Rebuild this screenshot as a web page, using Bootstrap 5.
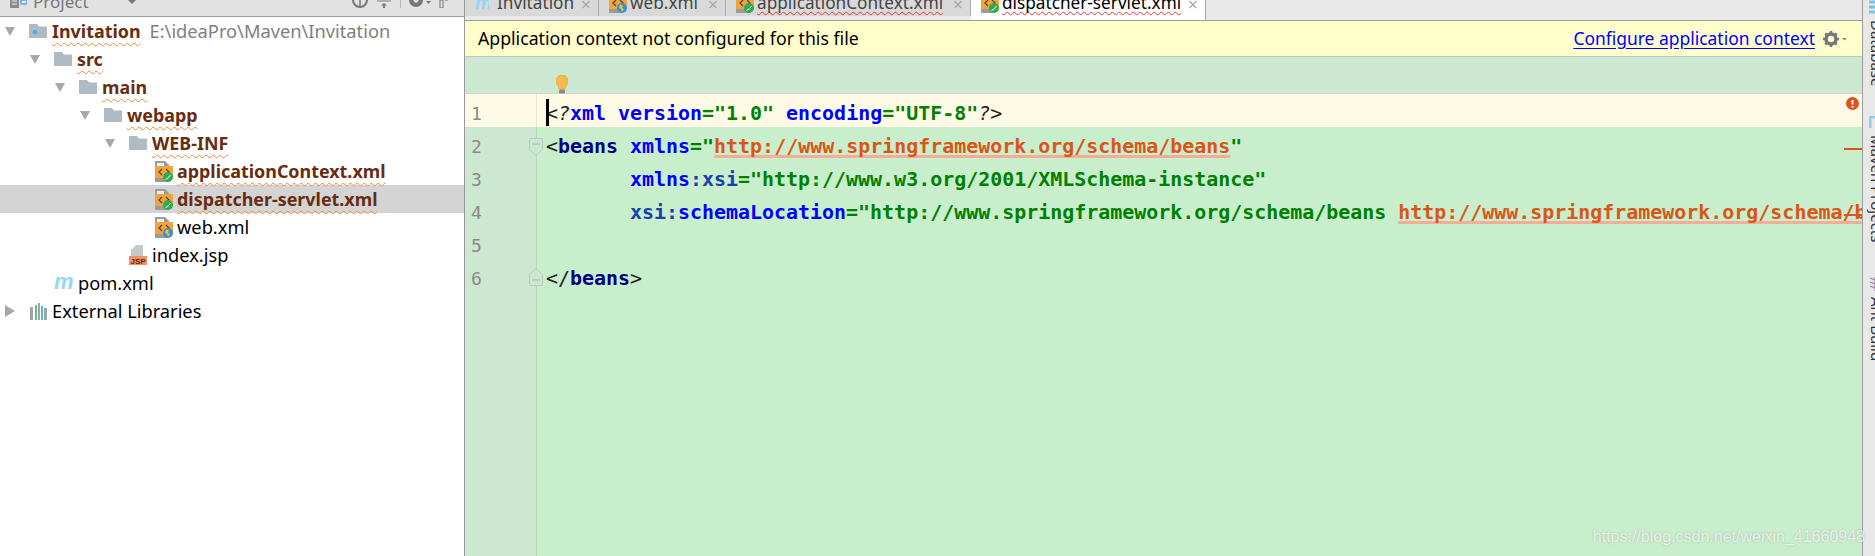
<!DOCTYPE html>
<html><head><meta charset="utf-8"><title>IDE</title>
<link rel="stylesheet" href="https://cdn.jsdelivr.net/npm/bootstrap@5.3.0/dist/css/bootstrap.min.css">
<style>
html,body{height:556px;overflow:hidden;margin:0}
body{font-family:"Noto Sans","Open Sans",sans-serif;font-size:18.25px;color:#000;background:#fff}
.ide-root{height:556px;width:1875px;position:relative}
.side-pane{width:465px;flex:none;border-right:1px solid #999}
.pane-head{height:17px;background:#e2e2e2;border-bottom:1px solid #9c9c9c;overflow:hidden;padding-left:10px;color:#777}
.pane-head svg{flex:none}
.pane-title{margin-left:6px;width:95px;line-height:26px;height:26px;margin-top:-11px;font-size:17px;flex:none}
.tree-row{height:28px;white-space:nowrap;line-height:28px}
.tree-row svg{flex:none}
.lv0{padding-left:5px}.lv1{padding-left:30px}.lv2{padding-left:55px}.lv3{padding-left:80px}.lv4{padding-left:105px}.lv5{padding-left:155px}
.lv-i{padding-left:129px}.lv-p{padding-left:54px}
.tri{width:10px;margin-right:14px}
.ico{margin-right:5px}
.tree-row.is-sel{background:#d4d4d4}
.bad{font-size:17.9px;font-weight:700;color:#682c10;text-decoration:underline wavy #f08a3c 1px;text-underline-offset:4px;text-decoration-skip-ink:none}
.dim{color:#808080;margin-left:9px}
.main-pane{min-width:0}
.tab-strip{height:21px;background:#e9e9e9;border-bottom:1px solid #9c9c9c;flex:none;overflow:hidden}
.ed-tab{height:16px;background:#d9d9d9;border-right:1px solid #aaa;overflow:hidden;padding-left:10px;font-size:17.2px}
.ed-tab.is-on{background:#fff;height:20px}
.tab-ico{flex:none}
.tab-lbl{line-height:26px;height:26px;margin-top:-10px;margin-left:3px;color:#444;white-space:nowrap}
.is-on .tab-lbl{color:#000}
.tab-x{color:#aaa;font-size:18px;line-height:14px;margin-top:-3px;margin-right:7px;margin-left:auto}
.red-sq{text-decoration:underline wavy #e33 1px;text-underline-offset:2px;text-decoration-skip-ink:none}
.note-bar{height:36px;background:#ffffcc;border-bottom:1px solid #c4c4c4;flex:none;padding:0 15px 0 13px;font-size:17.7px;line-height:35px}
.note-link{color:#0000ff;text-decoration:underline;text-underline-offset:3px;font-size:17.45px}
.code-area{position:relative;background:#c8eecb;min-height:0;overflow:hidden}
.top-space{height:37px;background:#cde8d1;flex:none;border-bottom:1px solid #d8d8c8}
.code-line{height:33px;flex:none}
.gut{width:72px;flex:none;background:#cce8d0;border-right:1px solid #b8d8bd;position:relative;color:#8a8a8a;font-family:"DejaVu Sans Mono",monospace;font-size:18px;line-height:39px;padding-left:6px}
.cur .gut,.cur{background:#fffae6}
.cur .gut{border-right-color:#ebe6d4}
.src{font-family:"DejaVu Sans Mono",monospace;font-size:19.94px;line-height:39px;white-space:pre;padding-left:9px;overflow:hidden;flex:1 1 0;color:#222}
.k{color:#000080;font-weight:700}.a{color:#0000ff;font-weight:700}.n{color:#1a3fb0;font-weight:700}.v{color:#008000;font-weight:700}
.e{color:#dc5518;font-weight:700;text-decoration:underline 3px #f7ac98;text-underline-offset:2px;text-decoration-skip-ink:none}
.q{font-style:italic}
.filler{background:#c8eecb;min-height:0}
.caret-bar{position:absolute;left:81px;top:42px;width:3px;height:27px;background:#000}
.bulb{position:absolute;left:91px;top:18px}
.fold{position:absolute;right:-7px}
.fold-a{top:11px}.fold-b{top:9px}
.err-dot{position:absolute;right:3px;top:40px}
.err-tick{position:absolute;right:0;width:18px;height:2px;background:#d9541e}
.tick-a{top:91px}.tick-b{top:157px}
.tool-rail{width:13px;flex:none;background:#e8e8e8;border-left:1px solid #9c9c9c;overflow:hidden;padding-left:6px}
.rail-lbl{writing-mode:vertical-rl;font-size:15px;line-height:15px;white-space:nowrap;color:#333;flex:none}
.rail-ico{flex:none}
.ic-a{margin-top:0}.ic-b{margin-top:30px}.ic-c{margin-top:32px}
.r1{margin-top:5px;height:66px}.r2{margin-top:7px;height:110px}.r3{margin-top:6px}
.mark-wm{position:absolute;right:10px;bottom:9px;font-family:"Liberation Sans",sans-serif;font-size:16px;line-height:20px;color:rgba(255,255,255,.72);text-shadow:0 0 2px rgba(120,120,120,.45);white-space:nowrap}
</style></head>
<body>
<svg width="0" height="0" class="position-absolute">
<defs>
<symbol id="fld" viewBox="0 0 18 14"><path d="M0 0h8l2 2.500h8V14H0z" fill="#afbac3"/></symbol>
<symbol id="xmlbase" viewBox="0 0 18 21"><path d="M0 0h10l4 4v17H0z" fill="#9b9b9b"/><path d="M2 2h7v4h3v2H2z" fill="#f2f2f2"/><rect y="5" width="18" height="12" fill="#f0a43e"/><path d="M7 8l-3 3 3 3M11 8l3 3-3 3" fill="none" stroke="#5a4020" stroke-width="1.200"/></symbol>
<symbol id="leaf" viewBox="0 0 10 10"><circle cx="5" cy="5" r="5" fill="#2eaa50"/><path d="M2.500 7.500Q5 7 7.500 3" fill="none" stroke="#fff" stroke-width="1"/></symbol>
<symbol id="globe" viewBox="0 0 10 10"><circle cx="5" cy="5" r="5" fill="#3a8fd6"/><path d="M3 1.500l3 1-1 2.500 2 1-2 3-1-3-2-1z" fill="#f2c230"/></symbol>
<symbol id="tri-d" viewBox="0 0 10 9"><path d="M0 0h10L5 9z" fill="#a8a8a8"/></symbol>
</defs>
</svg>
<div class="ide-root d-flex">
  <aside class="side-pane d-flex flex-column">
    <div class="pane-head d-flex">
      <svg width="17" height="8" viewBox="0 0 17 8"><path d="M0 0h9v8H0z" fill="#8a8a8a"/><path d="M2 1h5M2 4h5" stroke="#eee"/><path d="M11 0h6v4h-6z" fill="none" stroke="#5aa9d6" stroke-width="1.500"/></svg>
      <span class="pane-title">Project</span>
      <svg width="8" height="4" viewBox="0 0 8 4"><path d="M0 0h8L4 4z" fill="#777"/></svg>
      <span class="flex-grow-1"></span>
      <svg width="16" height="8" viewBox="0 0 16 8"><path d="M1 0a7 7 0 0 0 14 0" fill="none" stroke="#777" stroke-width="2"/><path d="M8 0v8" stroke="#777" stroke-width="1.500"/></svg>
      <svg class="ms-2" width="16" height="8" viewBox="0 0 16 8"><path d="M1 1h14" stroke="#777"/><path d="M8 3l-3 2.500h2V8h2V5.500h2z" fill="#777"/></svg>
      <svg class="ms-2" width="1" height="8"><rect width="1" height="8" fill="#bbb"/></svg>
      <svg class="ms-2" width="22" height="9" viewBox="0 0 22 9"><circle cx="7" cy="0" r="7" fill="#777"/><circle cx="7" cy="0" r="2.500" fill="#e2e2e2"/><path d="M17 1h5l-2.500 3z" fill="#777"/></svg>
      <svg class="ms-2 me-3" width="9" height="8" viewBox="0 0 9 8"><path d="M1 0h3v8H1z" fill="none" stroke="#777"/><path d="M6 0h3" stroke="#777"/></svg>
    </div>
    <ul class="list-unstyled m-0">
      <li class="tree-row lv0 d-flex align-items-center"><svg class="tri" width="10" height="9"><use href="#tri-d"/></svg><svg class="ico" width="18" height="14" viewBox="0 0 18 14"><use href="#fld" width="18" height="14"/><circle cx="6" cy="8" r="2.300" fill="#3fb2e8"/></svg><span class="bad">Invitation</span><span class="dim">E:\ideaPro\Maven\Invitation</span></li>
      <li class="tree-row lv1 d-flex align-items-center"><svg class="tri" width="10" height="9"><use href="#tri-d"/></svg><svg class="ico" width="18" height="14"><use href="#fld"/></svg><span class="bad">src</span></li>
      <li class="tree-row lv2 d-flex align-items-center"><svg class="tri" width="10" height="9"><use href="#tri-d"/></svg><svg class="ico" width="18" height="14"><use href="#fld"/></svg><span class="bad">main</span></li>
      <li class="tree-row lv3 d-flex align-items-center"><svg class="tri" width="10" height="9"><use href="#tri-d"/></svg><svg class="ico" width="18" height="14"><use href="#fld"/></svg><span class="bad">webapp</span></li>
      <li class="tree-row lv4 d-flex align-items-center"><svg class="tri" width="10" height="9"><use href="#tri-d"/></svg><svg class="ico" width="18" height="14"><use href="#fld"/></svg><span class="bad">WEB-INF</span></li>
      <li class="tree-row lv5 d-flex align-items-center"><svg class="me-1" width="18" height="21" viewBox="0 0 18 21"><use href="#xmlbase" width="18" height="21"/><use href="#leaf" x="8" y="11" width="10" height="10"/></svg><span class="bad">applicationContext.xml</span></li>
      <li class="tree-row is-sel lv5 d-flex align-items-center"><svg class="me-1" width="18" height="21" viewBox="0 0 18 21"><use href="#xmlbase" width="18" height="21"/><use href="#leaf" x="8" y="11" width="10" height="10"/></svg><span class="bad">dispatcher-servlet.xml</span></li>
      <li class="tree-row lv5 d-flex align-items-center"><svg class="me-1" width="18" height="21" viewBox="0 0 18 21"><use href="#xmlbase" width="18" height="21"/><use href="#globe" x="8" y="11" width="10" height="10"/></svg><span>web.xml</span></li>
      <li class="tree-row lv-i d-flex align-items-center"><svg class="ico" width="18" height="20" viewBox="0 0 18 20"><path d="M2 5l5-5h7v11H2z" fill="#c4c9cc"/><rect y="11" width="18" height="9" fill="#f2906a"/><text x="9" y="18.500" font-family="Liberation Sans,sans-serif" font-size="8" font-weight="700" text-anchor="middle" fill="#5a2a14">JSP</text></svg><span>index.jsp</span></li>
      <li class="tree-row lv-p d-flex align-items-center"><svg class="me-1" width="20" height="16" viewBox="0 0 20 16"><text x="0" y="14" font-family="Liberation Sans,sans-serif" font-style="italic" font-weight="700" font-size="22" fill="#93d7f4">m</text></svg><span>pom.xml</span></li>
      <li class="tree-row lv0 d-flex align-items-center"><svg class="tri" width="10" height="12" viewBox="0 0 10 12"><path d="M0 0l10 6-10 6z" fill="#a8a8a8"/></svg><svg class="ico" width="18" height="17" viewBox="0 0 18 17"><path d="M1 4h3v13H1z" fill="#9aa5ac"/><path d="M6 2h2v15H6z" fill="#6cbf6c"/><path d="M9 0h2v17H9z" fill="#9aa5ac"/><path d="M12 3h2v14h-2z" fill="#55b5e6"/><path d="M15 5h3v12h-3z" fill="#9aa5ac"/></svg><span>External Libraries</span></li>
    </ul>
  </aside>
  <main class="main-pane flex-grow-1 d-flex flex-column">
    <div class="tab-strip d-flex">
      <div class="ed-tab d-flex" style="width:134px"><svg class="tab-ico" width="14" height="10" viewBox="0 0 14 10"><text x="0" y="9" font-family="Liberation Sans,sans-serif" font-style="italic" font-weight="700" font-size="19" fill="#93d7f4">m</text></svg><span class="tab-lbl ms-2">Invitation</span><span class="tab-x">×</span></div>
      <div class="ed-tab d-flex" style="width:127px"><svg class="tab-ico" width="18" height="13" viewBox="0 8 18 13"><use href="#xmlbase" width="18" height="21"/><use href="#globe" x="8" y="11" width="10" height="10"/></svg><span class="tab-lbl">web.xml</span><span class="tab-x">×</span></div>
      <div class="ed-tab d-flex" style="width:245px"><svg class="tab-ico" width="18" height="13" viewBox="0 8 18 13"><use href="#xmlbase" width="18" height="21"/><use href="#leaf" x="8" y="11" width="10" height="10"/></svg><span class="tab-lbl red-sq">applicationContext.xml</span><span class="tab-x">×</span></div>
      <div class="ed-tab is-on d-flex" style="width:235px"><svg class="tab-ico" width="18" height="13" viewBox="0 8 18 13"><use href="#xmlbase" width="18" height="21"/><use href="#leaf" x="8" y="11" width="10" height="10"/></svg><span class="tab-lbl red-sq">dispatcher-servlet.xml</span><span class="tab-x">×</span></div>
    </div>
    <div class="note-bar d-flex justify-content-between align-items-center">
      <span>Application context not configured for this file</span>
      <span class="d-flex align-items-center"><a class="note-link" href="#">Configure application context</a>
      <svg class="ms-2" width="24" height="16" viewBox="0 0 24 16"><circle cx="8" cy="8" r="5" fill="none" stroke="#777" stroke-width="3.500"/><path d="M8 0v3M8 13v3M0 8h3M13 8h3M2.300 2.300l2 2M11.700 11.700l2 2M2.300 13.700l2-2M11.700 4.300l2-2" stroke="#777" stroke-width="2.500"/><path d="M19 7h5l-2.500 2.500z" fill="#888"/></svg></span>
    </div>
    <div class="code-area flex-grow-1 d-flex flex-column">
      <div class="top-space"></div>
      <div class="code-line cur d-flex"><div class="gut">1</div><div class="src">&lt;<span class="q">?</span><span class="a">xml version</span><span class="v">="1.0" </span><span class="a">encoding</span><span class="v">="UTF-8"</span><span class="q">?</span>&gt;</div></div>
      <div class="code-line d-flex"><div class="gut">2<svg class="fold fold-a" width="14" height="18" viewBox="0 0 14 18"><path d="M.5.5h13v11L7 17.500.5 11.500z" fill="#cce8d0" stroke="#b4ccb8"/><path d="M3 6h8" stroke="#a5b8a8"/></svg></div><div class="src">&lt;<span class="k">beans</span> <span class="a">xmlns</span><span class="v">="</span><span class="e">http://www.springframework.org/schema/beans</span><span class="v">"</span></div></div>
      <div class="code-line d-flex"><div class="gut">3</div><div class="src">       <span class="a">xmlns</span><span class="n">:xsi</span><span class="v">="http://www.w3.org/2001/XMLSchema-instance"</span></div></div>
      <div class="code-line d-flex"><div class="gut">4</div><div class="src">       <span class="n">xsi:</span><span class="a">schemaLocation</span><span class="v">="http://www.springframework.org/schema/beans </span><span class="e">http://www.springframework.org/schema/beans/spring-beans.xsd</span></div></div>
      <div class="code-line d-flex"><div class="gut">5</div><div class="src"></div></div>
      <div class="code-line d-flex"><div class="gut">6<svg class="fold fold-b" width="14" height="18" viewBox="0 0 14 18"><path d="M.5 17.500h13v-11L7 .5.5 6.500z" fill="#cce8d0" stroke="#b4ccb8"/><path d="M3 12h8" stroke="#a5b8a8"/></svg></div><div class="src">&lt;/<span class="k">beans</span>&gt;</div></div>
      <div class="filler flex-grow-1 d-flex"><div class="gut"></div></div>
      <span class="caret-bar"></span>
      <svg class="bulb" width="12" height="19" viewBox="0 0 12 19"><path d="M6 0a6 6 0 0 1 4 10.500L9 14H3l-1-3.500A6 6 0 0 1 6 0z" fill="#f5b94e" stroke="#e8a030" stroke-width=".6"/><rect x="3" y="14.500" width="6" height="4" rx="1" fill="#8a8a8a"/></svg>
      <svg class="err-dot" width="13" height="13" viewBox="0 0 13 13"><circle cx="6.500" cy="6.500" r="6.500" fill="#d9541e"/><path d="M6.500 3v4.500M6.500 9v1.500" stroke="#fff" stroke-width="2"/></svg>
      <span class="err-tick tick-a"></span><span class="err-tick tick-b"></span>
    </div>
  </main>
  <div class="tool-rail d-flex flex-column align-items-start">
    <svg class="rail-ico ic-a" width="12" height="15" viewBox="0 0 12 15"><path d="M0 2h12M0 7h12M0 12h12" stroke="#7cc4e6" stroke-width="3"/></svg>
    <span class="rail-lbl r1">Database</span>
    <svg class="rail-ico ic-b" width="12" height="12" viewBox="0 0 12 12"><path d="M1 12V3q0-2 2-2h9" fill="none" stroke="#8cd0ee" stroke-width="3"/></svg>
    <span class="rail-lbl r2">Maven Projects</span>
    <svg class="rail-ico ic-c" width="12" height="14" viewBox="0 0 12 14"><path d="M1 1l10 4M1 5l10 4M1 9l10 4M6 0v14" stroke="#9a8aa0" stroke-width="1.200"/></svg>
    <span class="rail-lbl r3">Ant Build</span>
  </div>
  <span class="mark-wm">https://blog.csdn.net/weixin_41660948</span>
</div>
</body></html>
